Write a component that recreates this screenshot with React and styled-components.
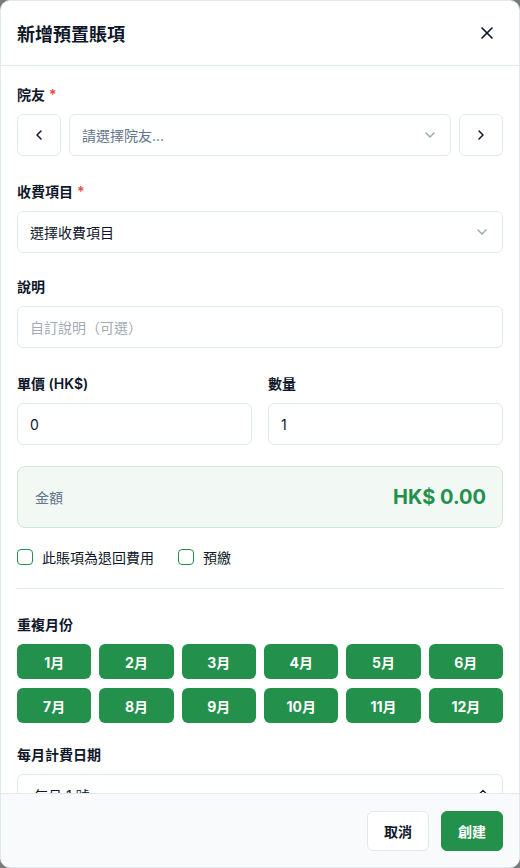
import styled, { createGlobalStyle } from "styled-components";
import { X, ChevronLeft, ChevronRight, ChevronDown, ChevronsUpDown } from "lucide-react";

const GlobalStyle = createGlobalStyle`
  html, body {
    margin: 0;
    padding: 0;
    background: #7a7a7a;
    font-family: "Inter", "Noto Sans CJK TC", sans-serif;
  }
  * { box-sizing: border-box; }
`;

const GREEN = "#23904c";

const Modal = styled.div`
  width: 520px;
  height: 868px;
  display: flex;
  flex-direction: column;
  background: #fff;
  border: 1px solid #e2e8f0;
  border-radius: 10px;
  overflow: hidden;
`;

const Header = styled.div`
  height: 65px;
  flex-shrink: 0;
  display: flex;
  align-items: center;
  justify-content: space-between;
  padding: 0 16px 0 16px;
  border-bottom: 1px solid #e2e8f0;
`;

const Title = styled.h2`
  margin: 0;
  font-size: 18px;
  font-weight: 700;
  color: #0f172a;
`;

const CloseBtn = styled.button`
  width: 32px;
  height: 32px;
  display: flex;
  align-items: center;
  justify-content: center;
  border: none;
  background: none;
  padding: 0;
  color: #0f172a;
  cursor: pointer;
`;

const Body = styled.div`
  flex: 1;
  overflow-y: auto;
  scrollbar-width: none;
  padding: 19px 16px 24px;
  display: flex;
  flex-direction: column;
  gap: 24px;
`;

const Field = styled.div`
  display: flex;
  flex-direction: column;
  gap: 9px;
  flex-shrink: 0;
  margin-top: ${(p) => p.$mt || 0}px;
`;

const Label = styled.div`
  font-size: 14px;
  font-weight: 600;
  color: #0f172a;
  line-height: 20px;
`;

const Req = styled.span`
  color: #ef4444;
  margin-left: 4px;
`;

const Row = styled.div`
  display: flex;
  gap: 8px;
`;

const NavBtn = styled.button`
  width: 44px;
  height: 42px;
  flex-shrink: 0;
  display: flex;
  align-items: center;
  justify-content: center;
  background: #fff;
  border: 1px solid #e2e8f0;
  border-radius: 6px;
  color: #0f172a;
  padding: 0;
`;

const SelectBox = styled.div`
  flex: ${(p) => (p.$grow ? "1 1 0" : "none")};
  height: 42px;
  display: flex;
  align-items: center;
  justify-content: space-between;
  padding: 0 12px 0 ${(p) => (p.$indent ? 16 : 12)}px;
  border: 1px solid #e2e8f0;
  border-radius: 6px;
  background: #fff;
  font-size: 14px;
  color: ${(p) => (p.$placeholder ? "#64748b" : "#0f172a")};
  svg { color: ${(p) => (p.$indent ? "#0f172a" : "#94a3b8")}; }
`;

const Input = styled.div`
  height: 42px;
  display: flex;
  align-items: center;
  padding: 0 12px;
  border: 1px solid #e2e8f0;
  border-radius: 6px;
  background: #fff;
  font-size: 14px;
  color: ${(p) => (p.$placeholder ? "#a3aab5" : "#0f172a")};
`;

const TwoCol = styled.div`
  display: grid;
  grid-template-columns: 1fr 1fr;
  gap: 16px;
  flex-shrink: 0;
  margin-top: 2px;
`;

const AmountBox = styled.div`
  height: 62px;
  flex-shrink: 0;
  display: flex;
  align-items: center;
  justify-content: space-between;
  padding: 0 16px 0 17px;
  background: #f2f8f3;
  border: 1px solid #cfe7d5;
  border-radius: 8px;
  margin-top: -3px;
`;

const AmountLabel = styled.span`
  font-size: 14px;
  color: #64748b;
`;

const AmountValue = styled.span`
  font-size: 20px;
  font-weight: 700;
  color: ${GREEN};
`;

const CheckRow = styled.div`
  display: flex;
  gap: 24px;
  margin-top: -5px;
  flex-shrink: 0;
`;

const CheckItem = styled.label`
  display: flex;
  align-items: center;
  gap: 9px;
  font-size: 14px;
  color: #0f172a;
`;

const Box = styled.span`
  width: 16px;
  height: 16px;
  flex-shrink: 0;
  border: 1px solid ${GREEN};
  border-radius: 4px;
  background: #fff;
`;

const Divider = styled.hr`
  margin: -3px 0 -1px;
  border: none;
  border-top: 1px solid #e2e8f0;
  flex-shrink: 0;
`;

const MonthGrid = styled.div`
  display: grid;
  grid-template-columns: repeat(6, 1fr);
  gap: 9px 8px;
`;

const MonthBtn = styled.button`
  height: 35px;
  border: none;
  border-radius: 6px;
  background: ${(p) => (p.$on ? GREEN : "#fff")};
  color: ${(p) => (p.$on ? "#fff" : "#0f172a")};
  font-family: inherit;
  font-size: 14px;
  font-weight: 700;
  padding: 0;
`;

const Footer = styled.div`
  flex-shrink: 0;
  height: 74px;
  display: flex;
  align-items: center;
  justify-content: flex-end;
  gap: 12px;
  padding: 0 16px;
  background: #f8fafc;
  border-top: 1px solid #e2e8f0;
`;

const FootBtn = styled.button`
  height: 40px;
  padding: 0 16px;
  border-radius: 6px;
  font-family: inherit;
  font-size: 14px;
  font-weight: 700;
  border: 1px solid ${(p) => (p.$primary ? GREEN : "#e2e8f0")};
  background: ${(p) => (p.$primary ? GREEN : "#fff")};
  color: ${(p) => (p.$primary ? "#fff" : "#0f172a")};
`;

const months = Array.from({ length: 12 }, (_, i) => `${i + 1}月`);

const App = () => {
  return (
    <>
      <GlobalStyle />
      <Modal>
        <Header>
          <Title>新增預置賬項</Title>
          <CloseBtn>
            <X size={20} strokeWidth={2} />
          </CloseBtn>
        </Header>
        <Body>
          <Field>
            <Label>
              院友<Req>*</Req>
            </Label>
            <Row>
              <NavBtn>
                <ChevronLeft size={16} strokeWidth={2.2} />
              </NavBtn>
              <SelectBox $grow $placeholder>
                請選擇院友...
                <ChevronDown size={16} />
              </SelectBox>
              <NavBtn>
                <ChevronRight size={16} strokeWidth={2.2} />
              </NavBtn>
            </Row>
          </Field>

          <Field $mt={2}>
            <Label>
              收費項目<Req>*</Req>
            </Label>
            <SelectBox>
              選擇收費項目
              <ChevronDown size={16} />
            </SelectBox>
          </Field>

          <Field>
            <Label>說明</Label>
            <Input $placeholder>自訂說明（可選）</Input>
          </Field>

          <TwoCol>
            <Field>
              <Label>單價 (HK$)</Label>
              <Input>0</Input>
            </Field>
            <Field>
              <Label>數量</Label>
              <Input>1</Input>
            </Field>
          </TwoCol>

          <AmountBox>
            <AmountLabel>金額</AmountLabel>
            <AmountValue>HK$ 0.00</AmountValue>
          </AmountBox>

          <CheckRow>
            <CheckItem>
              <Box />
              此賬項為退回費用
            </CheckItem>
            <CheckItem>
              <Box />
              預繳
            </CheckItem>
          </CheckRow>

          <Divider />

          <Field $mt={3}>
            <Label>重複月份</Label>
            <MonthGrid>
              {months.map((m) => (
                <MonthBtn key={m} $on>
                  {m}
                </MonthBtn>
              ))}
            </MonthGrid>
          </Field>

          <Field $mt={-2}>
            <Label>每月計費日期</Label>
            <SelectBox $indent>
              每月 1 號
              <ChevronsUpDown size={14} />
            </SelectBox>
          </Field>
        </Body>
        <Footer>
          <FootBtn>取消</FootBtn>
          <FootBtn $primary>創建</FootBtn>
        </Footer>
      </Modal>
    </>
  );
};

export default App;
